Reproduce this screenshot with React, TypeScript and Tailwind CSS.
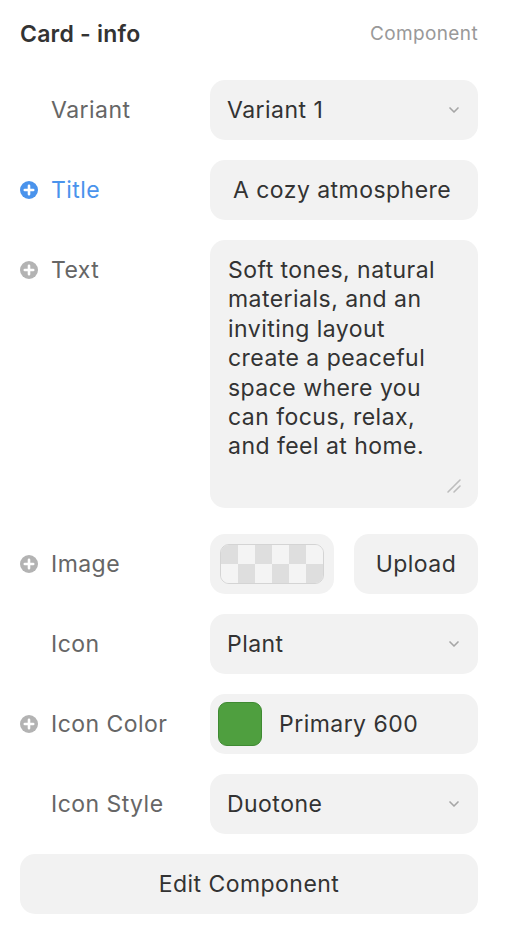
import { ChevronDown } from "lucide-react";

const FONT = { fontFamily: "Inter, 'Noto Sans', sans-serif" };

function PlusIcon({ active }: { active?: boolean }) {
  return (
    <svg width="18" height="18" viewBox="0 0 18 18" className="shrink-0">
      <circle cx="9" cy="9" r="9" fill={active ? "#4a93ec" : "#b3b3b3"} />
      <path d="M9 4.8v8.4M4.8 9h8.4" stroke="#fff" strokeWidth="2.6" strokeLinecap="round" />
    </svg>
  );
}

function Label({ text, plus, active }: { text: string; plus?: boolean; active?: boolean }) {
  return (
    <div className="w-[190px] shrink-0 h-[60px] flex items-center gap-[13px]">
      <div className="w-[18px] shrink-0">{plus && <PlusIcon active={active} />}</div>
      <span className={`text-[23px] tracking-[0.02em] ${active ? "text-[#4a93ec]" : "text-[#666666]"}`}>{text}</span>
    </div>
  );
}

function Select({ value }: { value: string }) {
  return (
    <div className="flex-1 h-[60px] rounded-[15px] bg-[#f2f2f2] flex items-center justify-between pl-[17px] pr-[16px]">
      <span className="text-[23px] tracking-[0.02em] text-[#333333]">{value}</span>
      <ChevronDown size={16} strokeWidth={2.5} className="text-[#a6a6a6]" />
    </div>
  );
}

function Checker() {
  const cells = [];
  for (let r = 0; r < 2; r++) {
    for (let c = 0; c < 6; c++) {
      const dark = (r + c) % 2 === 0;
      cells.push(<div key={`${r}-${c}`} className={dark ? "bg-[#dedede]" : "bg-[#f4f4f4]"} />);
    }
  }
  return (
    <div className="w-[104px] h-[40px] rounded-[9px] border border-[#d4d4d4] overflow-hidden grid grid-cols-6 grid-rows-2">
      {cells}
    </div>
  );
}

export default function App() {
  return (
    <div className="w-[508px] min-h-[928px] bg-white pl-5 pr-[30px] pt-[20px]" style={FONT}>
      <div className="flex items-center justify-between h-[28px] mb-[32px]">
        <span className="text-[23px] tracking-[0.01em] font-semibold text-[#333333]">Card - info</span>
        <span className="text-[19px] tracking-[0.02em] text-[#999999]">Component</span>
      </div>

      <div className="flex flex-col gap-5">
        <div className="flex">
          <Label text="Variant" />
          <Select value="Variant 1" />
        </div>

        <div className="flex">
          <Label text="Title" plus active />
          <div className="flex-1 h-[60px] rounded-[15px] bg-[#f2f2f2] flex items-center px-[23px]">
            <span className="text-[23px] tracking-[0.02em] text-[#333333] whitespace-nowrap">A cozy atmosphere</span>
          </div>
        </div>

        <div className="flex items-start">
          <Label text="Text" plus />
          <div className="relative flex-1 h-[268px] rounded-[15px] bg-[#f2f2f2] pl-[18px] pr-[20px] pt-[16px]">
            <p className="text-[23px] tracking-[0.02em] leading-[29.4px] text-[#333333]">
              Soft tones, natural materials, and an inviting layout create a peaceful space where you can focus, relax, and feel at home.
            </p>
            <svg width="16" height="16" viewBox="0 0 16 16" className="absolute right-[16px] bottom-[14px]">
              <path d="M2 14L14 2M8 14L14 8" stroke="#bdbdbd" strokeWidth="1.6" strokeLinecap="round" />
            </svg>
          </div>
        </div>

        <div className="flex mt-[6px]">
          <Label text="Image" plus />
          <div className="flex-1 flex gap-5">
            <div className="flex-1 h-[60px] rounded-[15px] bg-[#f2f2f2] flex items-center justify-center">
              <Checker />
            </div>
            <div className="flex-1 h-[60px] rounded-[15px] bg-[#f2f2f2] flex items-center justify-center">
              <span className="text-[23px] tracking-[0.02em] text-[#333333]">Upload</span>
            </div>
          </div>
        </div>

        <div className="flex">
          <Label text="Icon" />
          <Select value="Plant" />
        </div>

        <div className="flex">
          <Label text="Icon Color" plus />
          <div className="flex-1 h-[60px] rounded-[15px] bg-[#f2f2f2] flex items-center pl-[8px] gap-[17px]">
            <div className="w-[44px] h-[44px] rounded-[9px] bg-[#4f9f3f] border border-[#3f8a32]" />
            <span className="text-[23px] tracking-[0.02em] text-[#333333]">Primary 600</span>
          </div>
        </div>

        <div className="flex">
          <Label text="Icon Style" />
          <Select value="Duotone" />
        </div>

        <div className="h-[60px] rounded-[15px] bg-[#f2f2f2] flex items-center justify-center">
          <span className="text-[23px] tracking-[0.02em] text-[#333333]">Edit Component</span>
        </div>
      </div>
    </div>
  );
}
